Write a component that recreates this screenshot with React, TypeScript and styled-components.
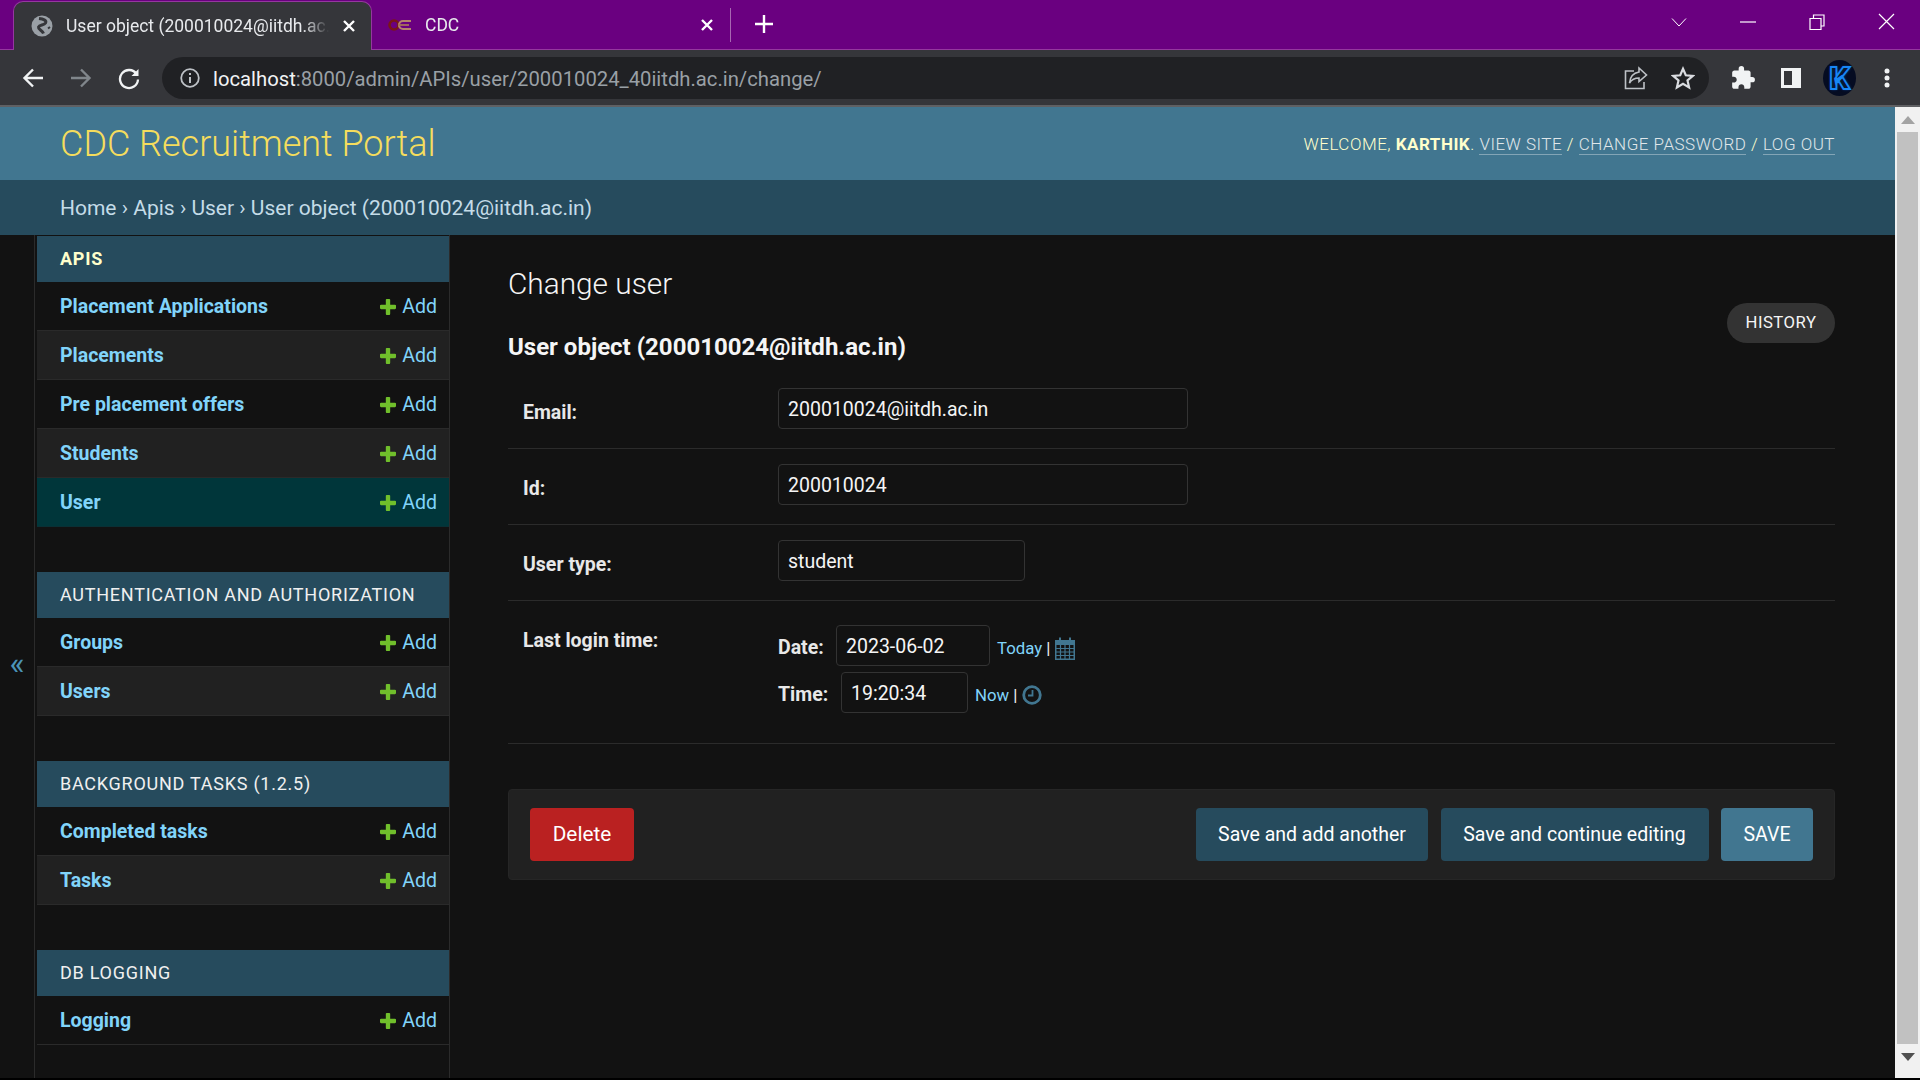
import React from "react";
import styled, { createGlobalStyle } from "styled-components";
import { MdExtension } from "react-icons/md";

const Global = createGlobalStyle`
  html, body { margin: 0; padding: 0; background: #000; overflow: hidden; }
  * { box-sizing: border-box; }
  body { font-family: Roboto, "Liberation Sans", sans-serif; }
`;

const Shell = styled.div`
  width: 1920px; height: 1080px; display: flex; flex-direction: column; overflow: hidden; background: #000;
`;
const TabStrip = styled.div`
  height: 50px; flex: none; background: #6a0080; border-bottom: 1px solid #95389f;
  display: flex; align-items: stretch; padding: 1px 0 0 13px; color: #fff;
`;
const ActiveTab = styled.div`
  width: 359px; height: 50px; background: #35363a; border: 1px solid #95389f; border-bottom: none;
  border-radius: 10px 10px 0 0; display: flex; align-items: center; padding: 0 15px 2px 17px; gap: 13px; flex: none;
`;
const InactiveTab = styled.div`
  width: 358px; display: flex; align-items: center; padding: 0 16px 0 16px; gap: 13px; flex: none;
`;
const TabTitle = styled.span`
  flex: 1; font-size: 17.500px; white-space: nowrap; overflow: hidden; color: #e8eaed;
  -webkit-mask-image: linear-gradient(90deg, #000 90%, transparent);
  mask-image: linear-gradient(90deg, #000 90%, transparent);
`;
const TabSeparator = styled.div`
  width: 1px; height: 34px; background: #a767b2; margin-top: 7px; flex: none;
`;
const NewTab = styled.div`
  width: 66px; display: flex; justify-content: center; align-items: center; padding-bottom: 2px; flex: none;
`;
const WindowControls = styled.div`
  margin-left: auto; display: flex; align-items: flex-start; padding-top: 13px; flex: none;
`;
const WindowButton = styled.div`
  width: 69px; height: 16px; display: flex; align-items: center; justify-content: center;
`;
const Toolbar = styled.div`
  height: 57px; flex: none; background: #35363a; border-bottom: 2px solid #5f6063;
  display: flex; align-items: center;
`;
const NavIcons = styled.div`
  width: 162px; flex: none; display: flex; align-items: center; padding-left: 21px; gap: 24px; margin-top: 1px;
`;
const AddressBar = styled.div`
  width: 1547px; height: 42px; flex: none; background: #202124; border-radius: 21px; display: flex; align-items: center;
  padding: 0 14px 0 18px; font-size: 20.250px; color: #9aa0a6; margin-top: 1px;
`;
const UrlText = styled.span`
  margin-left: 13px; padding-top: 2px;
`;
const Host = styled.span`
  color: #f1f3f4;
`;
const AddressActions = styled.div`
  margin-left: auto; display: flex; gap: 23px; align-items: center;
`;
const ExtIcons = styled.div`
  display: flex; align-items: center; padding-left: 21px; gap: 24px; margin-top: 1px;
`;
const Avatar = styled.div`
  width: 33px; height: 36px; border-radius: 50%; background: #050c22; color: #08182f; font-size: 32px; font-weight: 900;
  -webkit-text-stroke: 1.8px #1787f5;
  display: flex; align-items: center; justify-content: center; line-height: 1; text-shadow: 0 0 3px #0a6dff; margin: 0 3px 0 -3px;
`;
const PageRow = styled.div`
  height: 971px; flex: none; display: flex;
`;
const Viewport = styled.div`
  width: 1895px; flex: none; display: flex; flex-direction: column; background: #121212;
`;
const Header = styled.header`
  height: 73px; flex: none; background: #417690; display: flex; align-items: center; justify-content: space-between;
  padding: 0 60px 0 60px;
`;
const Branding = styled.h1`
  margin: 0; font-size: 36px; font-weight: 300; color: #f5dd5d; letter-spacing: 0;
`;
const UserTools = styled.div`
  font-size: 17px; font-weight: 300; color: #ffc; text-transform: uppercase; letter-spacing: 0.5px; white-space: nowrap;
  strong { font-weight: 700; }
`;
const ToolLink = styled.a`
  color: #e0e7ea; border-bottom: 1px solid rgba(255,255,255,0.35); text-decoration: none;
`;
const Breadcrumbs = styled.div`
  height: 55px; flex: none; background: #264b5d; color: #c4dce8; padding: 0 60px; display: flex; align-items: center; font-size: 21px;
`;
const Body = styled.div`
  flex: 1; display: flex; min-height: 0;
`;
const ToggleColumn = styled.div`
  width: 35px; flex: none; display: flex; align-items: center; justify-content: center; border-right: 1px solid #2b2b2b;
  color: #4b93b8; font-size: 32px; padding-top: 12px; background: #121212;
`;
const Sidebar = styled.nav`
  width: 415px; flex: none; border-right: 1px solid #2b2b2b; padding: 1px 0 0 2px;
`;
const Module = styled.section`
  margin-bottom: 45px;
`;
const Caption = styled.div<{ $active?: boolean }>`
  height: 46px; background: #264b5d; padding: 0 0 1px 23px; display: flex; align-items: center; font-size: 18px; letter-spacing: 0.750px;
  text-transform: uppercase; color: ${p => (p.$active ? "#ffffcc" : "#f0f0f0")}; font-weight: ${p => (p.$active ? 700 : 400)};
`;
const Row = styled.div<{ $alt?: boolean; $selected?: boolean }>`
  height: 49px; display: flex; align-items: center; justify-content: space-between; padding: 1px 12px 0 23px; font-size: 19.500px;
  border-bottom: 1px solid ${p => (p.$selected ? "#0a3035" : "#2a2a2a")};
  background: ${p => (p.$selected ? "#00363a" : p.$alt ? "#212121" : "transparent")};
`;
const ModelName = styled.a`
  color: #81d4fa; font-weight: 700; text-decoration: none;
`;
const AddLink = styled.a`
  color: #81d4fa; display: flex; align-items: center; gap: 6px; text-decoration: none;
`;
const Content = styled.main`
  flex: 1; padding: 0 60px 0 58px;
`;
const TitleBlock = styled.div`
  display: grid; grid-template-columns: 1fr auto; align-items: center;
`;
const PageTitle = styled.h1`
  grid-column: 1; margin: 0; padding-top: 31px; height: 96px; font-size: 29.800px; line-height: 36px; font-weight: 300; color: #f5f5f5;
`;
const ObjectTitle = styled.h2`
  grid-column: 1; margin: 0; height: 42px; line-height: 32px; font-size: 24px; font-weight: 700; color: #f5f5f5;
`;
const HistoryCell = styled.div`
  grid-column: 2; grid-row: 1 / span 2; padding-top: 37px; align-self: center;
`;
const History = styled.a`
  display: flex; width: 108px; height: 40px; border-radius: 20px; background: #333; color: #f5f5f5; align-items: center;
  justify-content: center; font-size: 16.700px; letter-spacing: 0.500px;
`;
const FormRow = styled.div<{ $tall?: boolean }>`
  height: ${p => (p.$tall ? 143 : 76)}px; border-bottom: 1px solid #2b2b2b; display: flex; align-items: flex-start;
  padding: ${p => (p.$tall ? 24 : 15)}px 0 0 15px;
`;
const Label = styled.label<{ $tall?: boolean }>`
  width: 255px; flex: none; font-size: 19.500px; font-weight: 700; color: #e8e8e8; padding-top: ${p => (p.$tall ? 4 : 13)}px;
`;
const Field = styled.div<{ $w: number }>`
  width: ${p => p.$w}px; height: 41px; border: 1px solid #333; border-radius: 4px; padding: 2px 9px 0 9px; display: flex; align-items: center;
  font-size: 19.500px; font-weight: 400; color: #f5f5f5; background: #121212; flex: none;
`;
const Split = styled.div`
  display: flex; flex-direction: column; gap: 6px;
`;
const SplitLine = styled.div`
  display: flex; align-items: center; font-size: 19.500px; font-weight: 700; color: #e8e8e8;
`;
const SplitLabel = styled.span<{ $w: number }>`
  width: ${p => p.$w}px; flex: none; padding-top: 4px;
`;
const Shortcut = styled.span`
  display: inline-flex; align-items: center; font-size: 16.800px; font-weight: 400; color: #81d4fa; margin-left: 7px; padding-top: 4px; gap: 4px;
`;
const Pipe = styled.span`
  color: #f5f5f5;
`;
const ClockSlot = styled.span`
  display: inline-flex; margin-left: 1px;
`;
const SubmitRow = styled.div`
  margin-top: 45px; height: 91px; background: #212121; border: 1px solid #262626; border-radius: 4px; display: flex; align-items: center;
  padding: 0 21px; gap: 12.500px;
`;
const Button = styled.a<{ $bg: string; $w: number; $push?: boolean }>`
  width: ${p => p.$w}px; height: 53px; background: ${p => p.$bg}; border-radius: 4px; color: #fff; display: flex; align-items: center;
  justify-content: center; font-size: ${p => (p.$push ? "20.800px" : "19.500px")}; padding-bottom: ${p => (p.$push ? "1px" : "0")}; flex: none; margin-right: ${p => (p.$push ? "auto" : "0")};
`;
const Scrollbar = styled.div`
  width: 25px; flex: none; background: #f1f1f1; display: flex; flex-direction: column; align-items: center;
`;
const ScrollArrow = styled.div`
  height: 25px; flex: none; display: flex; align-items: center; justify-content: center;
`;
const ScrollThumb = styled.div`
  width: 21px; height: 912px; background: #c1c1c1; flex: none;
`;

const Plus = () => (
  <svg width="16" height="16" viewBox="192 192 1408 1408">
    <path fill="#70bf2b" d="M1600 796v192q0 40-28 68t-68 28h-416v416q0 40-28 68t-68 28h-192q-40 0-68-28t-28-68v-416h-416q-40 0-68-28t-28-68v-192q0-40 28-68t68-28h416v-416q0-40 28-68t68-28h192q40 0 68 28t28 68v416h416q40 0 68 28t28 68z" />
  </svg>
);
const X = ({ s = 14, w = 2.4 }: { s?: number; w?: number }) => (
  <svg width={s} height={s} viewBox="0 0 14 14"><path d="M2 2 12 12M12 2 2 12" stroke="#fff" strokeWidth={w} /></svg>
);
const Globe = () => (
  <svg width="22" height="22" viewBox="0 0 22 22" fill="none">
    <circle cx="11" cy="11" r="10.500" fill="#9aa0a6" />
    <path d="M8 3.500C12 4 16 5 14.500 8 13 10.500 8.500 9.500 7.500 12 7 14.500 11 15 12.500 18.500" stroke="#35363a" strokeWidth="3" />
    <path d="M17 13.500 19 12" stroke="#35363a" strokeWidth="2" />
  </svg>
);
const CdcLogo = () => (
  <svg width="24" height="12" viewBox="0 0 24 12" fill="none">
    <circle cx="6" cy="6" r="4.500" stroke="#7a1616" strokeWidth="2.600" />
    <path d="M23 2H15a4 4 0 0 0 0 8H23" stroke="#b5826a" strokeWidth="2.200" />
    <path d="M10 6H21" stroke="#a8705a" strokeWidth="1.800" />
  </svg>
);
const Line = ({ d, c = "#fff", w = 1.2, s = 20 }: { d: string; c?: string; w?: number; s?: number }) => (
  <svg width={s} height={s} viewBox="0 0 20 20" fill="none"><path d={d} stroke={c} strokeWidth={w} /></svg>
);
const Arrow = ({ c, flip }: { c: string; flip?: boolean }) => (
  <svg width="24" height="24" viewBox="0 0 24 24" fill="none" style={flip ? { transform: "scaleX(-1)" } : undefined}>
    <path d="M22 12H4M12 3.500 3.500 12l8.500 8.500" stroke={c} strokeWidth="2.400" />
  </svg>
);
const Reload = () => (
  <svg width="24" height="24" viewBox="0 0 24 24" fill="none">
    <path d="M19.500 8A9 9 0 1 0 21 13.500" stroke="#f1f3f4" strokeWidth="2.300" />
    <path d="M21.500 3v7h-7z" fill="#f1f3f4" />
  </svg>
);
const Info = () => (
  <svg width="20" height="20" viewBox="0 0 20 20" fill="none">
    <circle cx="10" cy="10" r="8.800" stroke="#bdc1c6" strokeWidth="1.800" />
    <path d="M10 9v6M10 5v2" stroke="#bdc1c6" strokeWidth="2" />
  </svg>
);
const Share = () => (
  <svg width="24" height="24" viewBox="0 0 24 24" fill="none">
    <path d="M10 5H1.500v17.500H20V16" stroke="#bdc1c6" strokeWidth="1.600" />
    <path d="M15 2 22.500 9 15 15.500V12c-4 0-7 1-9.500 5C6 11 9 7 15 6Z" stroke="#bdc1c6" strokeWidth="1.600" />
  </svg>
);
const Star = () => (
  <svg width="24" height="24" viewBox="0 0 24 24" fill="none">
    <path d="M12 2.800 14.800 9.300 21.800 9.900 16.500 14.500 18.100 21.400 12 17.800 5.900 21.400 7.500 14.500 2.200 9.900 9.200 9.300Z" stroke="#dadce0" strokeWidth="2.200" />
  </svg>
);
const Panel = () => (
  <svg width="22" height="22" viewBox="0 0 22 22">
    <path fillRule="evenodd" fill="#f1f3f4" d="M1 1h20v20H1ZM4 4v14h8V4Z" />
  </svg>
);
const Dots = () => (
  <svg width="8" height="24" viewBox="0 0 8 24">
    <circle cx="4" cy="5" r="2.500" fill="#f1f3f4" /><circle cx="4" cy="12" r="2.500" fill="#f1f3f4" /><circle cx="4" cy="19" r="2.500" fill="#f1f3f4" />
  </svg>
);
const Calendar = () => (
  <svg width="22" height="24" viewBox="0 0 22 24" fill="none">
    <path fill="#417690" d="M1 4h4V1.500h2V4h8V1.500h2V4h4v20H1Z" />
    <path fill="#121212" d="M2.500 9h17v13.500h-17Z" />
    <path d="M2 12.500h18M2 16h18M2 19.500h18M6.500 9v14M11 9v14M15.500 9v14" stroke="#417690" strokeWidth="1.200" />
  </svg>
);
const Clock = () => (
  <svg width="20" height="20" viewBox="0 0 20 20" fill="none">
    <circle cx="10" cy="10" r="8.300" stroke="#417690" strokeWidth="2.800" />
    <path d="M10.500 5v5.500H6" stroke="#417690" strokeWidth="1.800" />
  </svg>
);

const modules = [
  { title: "Apis", active: true, rows: ["Placement Applications", "Placements", "Pre placement offers", "Students", "User"] },
  { title: "Authentication and Authorization", rows: ["Groups", "Users"] },
  { title: "Background Tasks (1.2.5)", rows: ["Completed tasks", "Tasks"] },
  { title: "DB Logging", rows: ["Logging"] },
];

export default function App() {
  return (
    <Shell>
      <Global />
      <TabStrip>
        <ActiveTab>
          <Globe />
          <TabTitle>User object (200010024@iitdh.ac.in)</TabTitle>
          <X />
        </ActiveTab>
        <InactiveTab>
          <CdcLogo />
          <TabTitle>CDC</TabTitle>
          <X />
        </InactiveTab>
        <TabSeparator />
        <NewTab>
          <svg width="18" height="18" viewBox="0 0 18 18"><path d="M9 0v18M0 9h18" stroke="#fff" strokeWidth="2.400" /></svg>
        </NewTab>
        <WindowControls>
          <WindowButton><Line d="M3 6.500 10 14 17 6.500" w={1} /></WindowButton>
          <WindowButton><Line d="M2 10H18" /></WindowButton>
          <WindowButton><Line d="M3 6.500h11v11H3ZM6.500 6.500V3H17v11h-3" /></WindowButton>
          <WindowButton><Line d="M3 2 18 17M18 2 3 17" /></WindowButton>
        </WindowControls>
      </TabStrip>
      <Toolbar>
        <NavIcons>
          <Arrow c="#f1f3f4" />
          <Arrow c="#80868b" flip />
          <Reload />
        </NavIcons>
        <AddressBar>
          <Info />
          <UrlText><Host>localhost</Host>:8000/admin/APIs/user/200010024_40iitdh.ac.in/change/</UrlText>
          <AddressActions>
            <Share />
            <Star />
          </AddressActions>
        </AddressBar>
        <ExtIcons>
          <MdExtension size={26} color="#f1f3f4" />
          <Panel />
          <Avatar>K</Avatar>
          <Dots />
        </ExtIcons>
      </Toolbar>
      <PageRow>
        <Viewport>
          <Header>
            <Branding>CDC Recruitment Portal</Branding>
            <UserTools>
              Welcome, <strong>Karthik</strong>. <ToolLink>View site</ToolLink> / <ToolLink>Change password</ToolLink> / <ToolLink>Log out</ToolLink>
            </UserTools>
          </Header>
          <Breadcrumbs>Home › Apis › User › User object (200010024@iitdh.ac.in)</Breadcrumbs>
          <Body>
            <ToggleColumn>«</ToggleColumn>
            <Sidebar>
              {modules.map(m => (
                <Module key={m.title}>
                  <Caption $active={m.active}>{m.title}</Caption>
                  {m.rows.map((r, i) => (
                    <Row key={r} $alt={i % 2 === 1} $selected={r === "User"}>
                      <ModelName>{r}</ModelName>
                      <AddLink><Plus />Add</AddLink>
                    </Row>
                  ))}
                </Module>
              ))}
            </Sidebar>
            <Content>
              <TitleBlock>
                <PageTitle>Change user</PageTitle>
                <ObjectTitle>User object (200010024@iitdh.ac.in)</ObjectTitle>
                <HistoryCell><History>HISTORY</History></HistoryCell>
              </TitleBlock>
              <FormRow>
                <Label>Email:</Label>
                <Field $w={410}>200010024@iitdh.ac.in</Field>
              </FormRow>
              <FormRow>
                <Label>Id:</Label>
                <Field $w={410}>200010024</Field>
              </FormRow>
              <FormRow>
                <Label>User type:</Label>
                <Field $w={247}>student</Field>
              </FormRow>
              <FormRow $tall>
                <Label $tall>Last login time:</Label>
                <Split>
                  <SplitLine>
                    <SplitLabel $w={58}>Date:</SplitLabel>
                    <Field $w={154}>2023-06-02</Field>
                    <Shortcut>Today <Pipe>|</Pipe> <Calendar /></Shortcut>
                  </SplitLine>
                  <SplitLine>
                    <SplitLabel $w={63}>Time:</SplitLabel>
                    <Field $w={127}>19:20:34</Field>
                    <Shortcut>Now <Pipe>|</Pipe> <ClockSlot><Clock /></ClockSlot></Shortcut>
                  </SplitLine>
                </Split>
              </FormRow>
              <SubmitRow>
                <Button $bg="#ba2121" $w={104} $push>Delete</Button>
                <Button $bg="#264b5d" $w={232}>Save and add another</Button>
                <Button $bg="#264b5d" $w={268}>Save and continue editing</Button>
                <Button $bg="#417690" $w={92}>SAVE</Button>
              </SubmitRow>
            </Content>
          </Body>
        </Viewport>
        <Scrollbar>
          <ScrollArrow>
            <svg width="14" height="8" viewBox="0 0 14 8"><path d="M7 0 14 8H0Z" fill="#a3a3a3" /></svg>
          </ScrollArrow>
          <ScrollThumb />
          <ScrollArrow>
            <svg width="14" height="8" viewBox="0 0 14 8"><path d="M7 8 14 0H0Z" fill="#505050" /></svg>
          </ScrollArrow>
        </Scrollbar>
      </PageRow>
    </Shell>
  );
}
